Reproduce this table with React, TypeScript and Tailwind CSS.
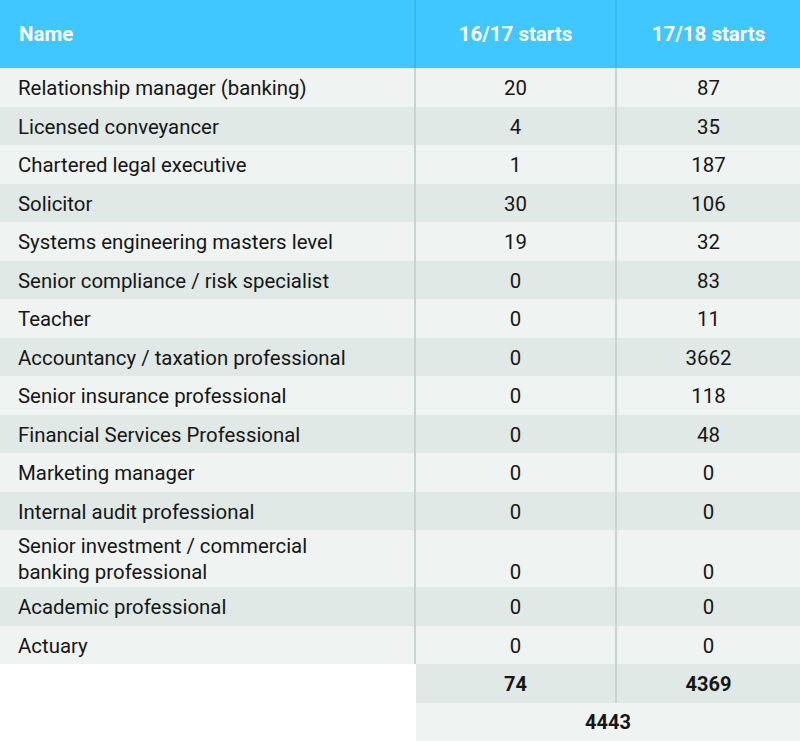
import React from 'react';

type Row = { name: string[]; a: string; b: string };

const rows: Row[] = [
  { name: ['Relationship manager (banking)'], a: '20', b: '87' },
  { name: ['Licensed conveyancer'], a: '4', b: '35' },
  { name: ['Chartered legal executive'], a: '1', b: '187' },
  { name: ['Solicitor'], a: '30', b: '106' },
  { name: ['Systems engineering masters level'], a: '19', b: '32' },
  { name: ['Senior compliance / risk specialist'], a: '0', b: '83' },
  { name: ['Teacher'], a: '0', b: '11' },
  { name: ['Accountancy / taxation professional'], a: '0', b: '3662' },
  { name: ['Senior insurance professional'], a: '0', b: '118' },
  { name: ['Financial Services Professional'], a: '0', b: '48' },
  { name: ['Marketing manager'], a: '0', b: '0' },
  { name: ['Internal audit professional'], a: '0', b: '0' },
  { name: ['Senior investment / commercial', 'banking professional'], a: '0', b: '0' },
  { name: ['Academic professional'], a: '0', b: '0' },
  { name: ['Actuary'], a: '0', b: '0' },
];

export default function App() {
  return (
    <div className="w-[800px] h-[741px] bg-white text-[#161616] font-['Roboto',sans-serif] text-[20.4px]">
      {/* header */}
      <div className="grid grid-cols-[416px_201px_183px] h-[68px] bg-[#40c7ff] text-white font-bold text-[20.5px]">
        <div className="flex items-center pl-[19px] border-r-2 border-[#38b9f0]">Name</div>
        <div className="flex items-center justify-center border-r-2 border-[#38b9f0]">16/17 starts</div>
        <div className="flex items-center justify-center">17/18 starts</div>
      </div>

      {rows.map((row, i) => {
        const tall = row.name.length > 1;
        const bg = i % 2 === 0 ? 'bg-[#eff3f2]' : 'bg-[#e0e9e6]';
        return (
          <div
            key={i}
            className={`grid grid-cols-[416px_201px_183px] ${bg} ${tall ? 'h-[57px]' : 'h-[38.5px]'}`}
          >
            <div
              className={`flex flex-col pl-[18px] border-r-2 border-[#c9d3d1] leading-[26px] ${tall ? 'justify-end pb-[2px]' : 'justify-center pt-[2px]'}`}
            >
              {row.name.map((l) => (
                <span key={l}>{l}</span>
              ))}
            </div>
            <div
              className={`flex justify-center border-r-2 border-[#c9d3d1] leading-[26px] ${tall ? 'items-end pb-[2px]' : 'items-center pt-[2px]'}`}
            >
              {row.a}
            </div>
            <div
              className={`flex justify-center leading-[26px] ${tall ? 'items-end pb-[2px]' : 'items-center pt-[2px]'}`}
            >
              {row.b}
            </div>
          </div>
        );
      })}

      {/* totals */}
      <div className="grid grid-cols-[416px_201px_183px] h-[39px] font-bold text-[20px]">
        <div className="bg-white" />
        <div className="flex items-center justify-center bg-[#e0e9e6] border-r-2 border-[#c9d3d1]">74</div>
        <div className="flex items-center justify-center bg-[#e0e9e6]">4369</div>
      </div>
      <div className="grid grid-cols-[416px_384px] h-[38px] font-bold text-[20px]">
        <div className="bg-white" />
        <div className="flex items-center justify-center bg-[#eff3f2]">4443</div>
      </div>
    </div>
  );
}
